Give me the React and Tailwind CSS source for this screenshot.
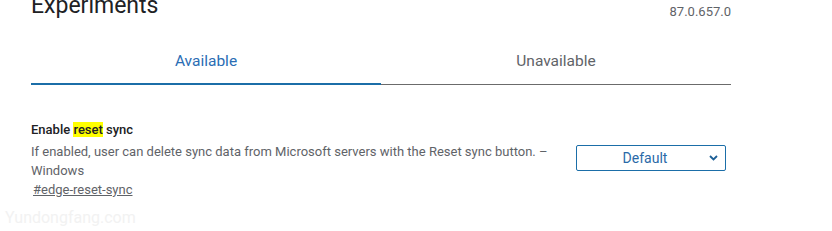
export default function App() {
  return (
    <div className="w-[832px] h-[231px] overflow-hidden bg-white relative font-['Roboto',sans-serif]">
      <div className="ml-[31px] w-[700px]">
        {/* Header */}
        <div className="flex justify-between items-start h-[20px]">
          <h1 className="mt-[-9px] text-[23px] leading-[29px] text-[#202124] font-normal">Experiments</h1>
          <span className="mt-[3px] text-[13px] leading-[18px] text-[#5f6368]">87.0.657.0</span>
        </div>

        {/* Tabs */}
        <div className="flex items-end">
          <div className="w-1/2 pt-[31px] pb-[12px] text-center text-[15.5px] leading-[20px] text-[#2a6db4] border-b-2 border-[#1b6ea8]">
            Available
          </div>
          <div className="w-1/2 pt-[31px] pb-[13px] text-center text-[15.5px] leading-[20px] text-[#5f6368] border-b border-[#6b6b6b]">
            Unavailable
          </div>
        </div>

        {/* Feature */}
        <div className="flex items-start mt-[36px]">
          <div className="w-[530px]">
            <p className="text-[13px] leading-[18px] font-medium text-[#202124]">
              Enable <span className="bg-[#ffff00]">reset</span> sync
            </p>
            <p className="mt-[3px] text-[13px] leading-[19px] text-[#5f6368]">
              If enabled, user can delete sync data from Microsoft servers with the Reset sync button. – Windows
            </p>
            <a className="block mt-[1px] ml-[2px] text-[13px] leading-[18px] text-[#5f6368] underline">#edge-reset-sync</a>
          </div>
          <div className="ml-[15px] mt-[24px] w-[150px] h-[26px] border border-[#1b6ea8] rounded-[2px] flex items-center relative">
            <span className="flex-1 text-center text-[14px] text-[#2a6aa8] pr-[12px] pt-[1px]">Default</span>
            <svg className="absolute right-[7px] top-[9px]" width="9" height="6" viewBox="0 0 9 6">
              <path d="M1 1l3.5 3.5L8 1" fill="none" stroke="#1d5f96" strokeWidth="1.8" />
            </svg>
          </div>
        </div>
      </div>
      <div className="absolute left-[5px] top-[207px] text-[16px] leading-[22px] text-[#f2f2f2]">Yundongfang.com</div>
    </div>
  );
}
